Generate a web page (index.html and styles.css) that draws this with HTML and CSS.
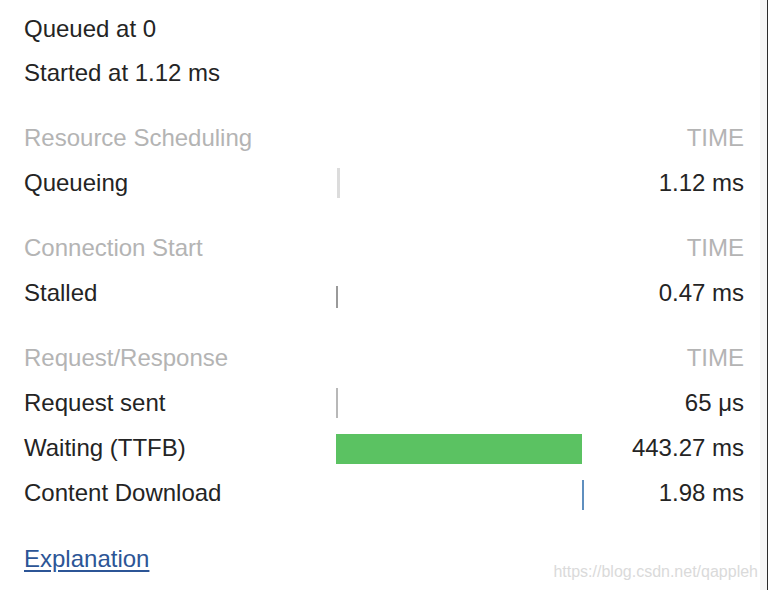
FILE: index.html
```html
<!DOCTYPE html>
<html>
<head>
<meta charset="utf-8">
<link rel="stylesheet" href="styles.css">
</head>
<body>
<div class="page">
  <div class="panel">
    <div class="meta">
      <div class="meta-row">Queued at 0</div>
      <div class="meta-row">Started at 1.12 ms</div>
    </div>

    <div class="section">
      <div class="row head"><span>Resource Scheduling</span><span></span><span class="time">TIME</span></div>
      <div class="row">
        <span>Queueing</span>
        <span class="track"><span class="bar bar-queue" style="margin-left:1px"></span></span>
        <span class="time">1.12 ms</span>
      </div>
    </div>

    <div class="section">
      <div class="row head"><span>Connection Start</span><span></span><span class="time">TIME</span></div>
      <div class="row">
        <span>Stalled</span>
        <span class="track"><span class="bar bar-stall" style="margin-left:0px"></span></span>
        <span class="time">0.47 ms</span>
      </div>
    </div>

    <div class="section">
      <div class="row head"><span>Request/Response</span><span></span><span class="time">TIME</span></div>
      <div class="row">
        <span>Request sent</span>
        <span class="track"><span class="bar bar-sent" style="margin-left:0px"></span></span>
        <span class="time">65 μs</span>
      </div>
      <div class="row">
        <span>Waiting (TTFB)</span>
        <span class="track"><span class="bar bar-wait" style="margin-left:0px;width:246px"></span></span>
        <span class="time">443.27 ms</span>
      </div>
      <div class="row">
        <span>Content Download</span>
        <span class="track"><span class="bar bar-down" style="margin-left:246px"></span></span>
        <span class="time">1.98 ms</span>
      </div>
    </div>

    <div class="footer">
      <a class="link" href="#">Explanation</a>
    </div>

    <div class="watermark">https://blog.csdn.net/qappleh</div>
  </div>
  <div class="edge"></div>
</div>
</body>
</html>
```

FILE: styles.css
```css
html, body {
  margin: 0;
  padding: 0;
  background: #ffffff;
}

body {
  font-family: "Liberation Sans", Arial, Helvetica, sans-serif;
  font-size: 24px;
  color: #242424;
}

.page {
  display: flex;
  width: 768px;
  height: 590px;
  overflow: hidden;
}

.panel {
  position: relative;
  width: 712px;
  padding: 7px 24px 0 24px;
  flex: none;
}

.edge {
  flex: 1;
  background: #f5f5f5;
  border-right: 1px solid #2a2a2a;
}

.meta-row {
  height: 44px;
  display: flex;
  align-items: center;
}

.section {
  margin-top: 20px;
}

.row {
  display: grid;
  grid-template-columns: 312px 248px 1fr;
  align-items: center;
  height: 45px;
  width: 720px;
}

.head {
  color: #b4b4b4;
}

.time {
  text-align: right;
}

.track {
  display: flex;
  align-items: center;
  height: 45px;
}

.bar {
  display: block;
  flex: none;
  height: 30px;
}

.bar-queue {
  width: 3px;
  background: #dcdcdc;
}

.bar-stall {
  width: 2px;
  height: 22px;
  margin-top: 8px;
  background: #9a9a9a;
}

.bar-sent {
  width: 2px;
  background: #b8b8b8;
}

.bar-wait {
  margin-top: 2px;
  background: #5bc262;
}

.bar-down {
  width: 2px;
  margin-top: 4px;
  background: #5f8fbf;
}

.footer {
  margin-top: 21px;
  height: 45px;
  display: flex;
  align-items: center;
}

.link {
  color: #2c5596;
  text-decoration: underline;
  text-underline-offset: 3px;
}

.watermark {
  position: absolute;
  right: 2px;
  bottom: 9px;
  font-size: 16px;
  color: #dadada;
}
```
